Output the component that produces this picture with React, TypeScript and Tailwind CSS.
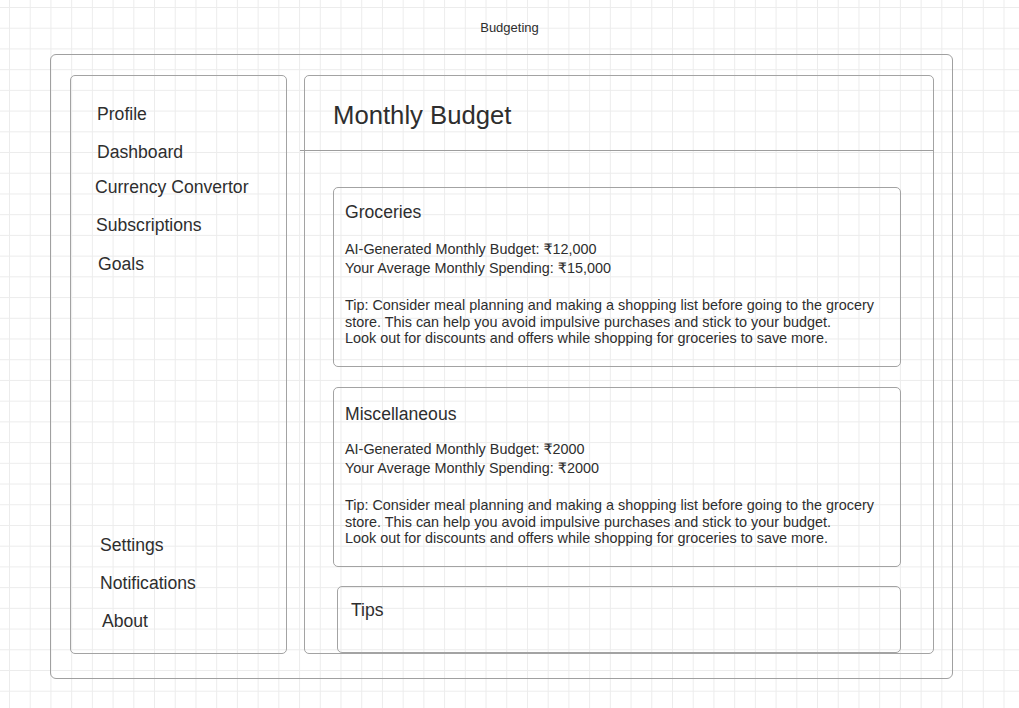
const nav = [
  { label: 'Profile', cls: 'mt-[28px] pl-[26px]' },
  { label: 'Dashboard', cls: 'mt-[18px] pl-[26px]' },
  { label: 'Currency Convertor', cls: 'mt-[15px] pl-[24px]' },
  { label: 'Subscriptions', cls: 'mt-[18px] pl-[25px]' },
  { label: 'Goals', cls: 'mt-[19px] pl-[27px]' },
];

const bottomNav = [
  { label: 'Settings', cls: 'pl-[29px]' },
  { label: 'Notifications', cls: 'mt-[18px] pl-[29px]' },
  { label: 'About', cls: 'mt-[18px] pl-[31px]' },
];

const tip =
  'Tip: Consider meal planning and making a shopping list before going to the grocery store. This can help you avoid impulsive purchases and stick to your budget.';
const tip2 = 'Look out for discounts and offers while shopping for groceries to save more.';

function BudgetCard({ title, ai, avg, titleTop }: { title: string; ai: string; avg: string; titleTop: string }) {
  return (
    <div className="ml-[28px] h-[180px] w-[568px] shrink-0 rounded-[5px] border border-[#a3a3a3] px-[11px]">
      <div className={`h-[52px] ${titleTop}`}>
        <p className="text-[17.6px] leading-[20px]">{title}</p>
      </div>
      <p className="text-[14.4px] leading-[19px]">AI-Generated Monthly Budget: {ai}</p>
      <p className="text-[14.4px] leading-[19px]">Your Average Monthly Spending: {avg}</p>
      <p className="mt-[19px] w-[545px] text-[14.4px] leading-[16.5px]">{tip}</p>
      <p className="text-[14.4px] leading-[16.5px]">{tip2}</p>
    </div>
  );
}

export default function App() {
  return (
    <div className="h-[708px] w-[1019px] overflow-hidden bg-white bg-[linear-gradient(to_right,#ececec_1px,transparent_1px),linear-gradient(to_bottom,#ececec_1px,transparent_1px)] bg-[size:20.72px_20.72px] bg-[position:9px_7px] font-['Liberation_Sans','DejaVu_Sans',Arial,sans-serif] text-[#2e2e2e]">
      <div className="flex h-[54px] items-center justify-center pt-[2px] text-[13px]">Budgeting</div>
      <div className="ml-[50px] flex h-[625px] w-[903px] gap-[17px] rounded-[6px] border border-[#a0a0a0] pl-[19px] pt-[20px]">
        <div className="flex h-[579px] w-[217px] shrink-0 flex-col justify-between rounded-[5px] border border-[#a3a3a3] text-[17.6px] leading-[20px]">
          <div className="flex flex-col">
            {nav.map((n) => (
              <p key={n.label} className={n.cls}>
                {n.label}
              </p>
            ))}
          </div>
          <div className="mb-[22px] flex flex-col">
            {bottomNav.map((n) => (
              <p key={n.label} className={n.cls}>
                {n.label}
              </p>
            ))}
          </div>
        </div>
        <div className="flex h-[579px] w-[630px] shrink-0 flex-col rounded-[5px] border border-[#a3a3a3]">
          <div className="h-[74px] shrink-0 pl-[28px] pt-[24px]">
            <h1 className="text-[25.7px] leading-[30px]">Monthly Budget</h1>
          </div>
          <div className="-ml-[5px] h-px w-[634px] shrink-0 bg-[#9e9e9e]" />
          <div className="mt-[36px] flex shrink-0 flex-col">
            <BudgetCard title="Groceries" ai="₹12,000" avg="₹15,000" titleTop="pt-[14px]" />
            <div className="h-[20px] shrink-0" />
            <BudgetCard title="Miscellaneous" ai="₹2000" avg="₹2000" titleTop="pt-[16px]" />
            <div className="h-[19px] shrink-0" />
            <div className="ml-[32px] h-[67px] w-[564px] shrink-0 rounded-[5px] border border-[#a3a3a3] px-[13px]">
              <p className="mt-[13px] text-[17.6px] leading-[20px]">Tips</p>
            </div>
          </div>
        </div>
      </div>
    </div>
  );
}
